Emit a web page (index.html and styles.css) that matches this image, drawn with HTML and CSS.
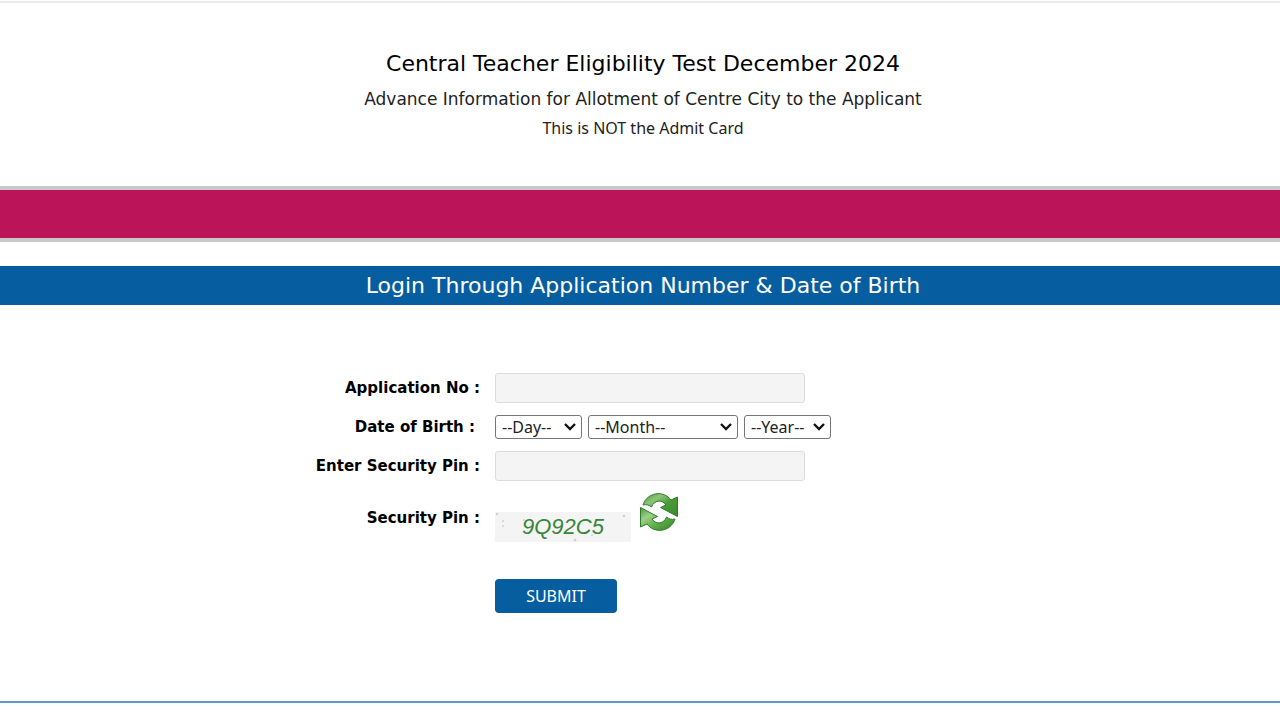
FILE: index.html
```html
<!DOCTYPE html>
<html lang="en">
<head>
  <meta charset="utf-8">
  <title>Central Teacher Eligibility Test December 2024</title>
  <link rel="stylesheet" href="styles.css">
</head>
<body>
  <header class="header">
    <h1>Central Teacher Eligibility Test December 2024</h1>
    <h2>Advance Information for Allotment of Centre City to the Applicant</h2>
    <p>This is NOT the Admit Card</p>
  </header>
  <div class="menubar"></div>
  <main>
    <h2 class="title">Login Through Application Number &amp; Date of Birth</h2>
    <form class="login">
      <label for="regno">Application No :</label>
      <div><input type="text" id="regno" class="textbox"></div>

      <label for="day" class="dob-label">Date of Birth :</label>
      <div class="dob">
        <select id="day" class="short"><option>--Day--</option></select>
        <select id="month" class="month" aria-label="Month"><option>--Month--</option></select>
        <select id="year" class="short" aria-label="Year"><option>--Year--</option></select>
      </div>

      <label for="pin">Enter Security Pin :</label>
      <div><input type="text" id="pin" class="textbox"></div>

      <span class="label">Security Pin :</span>
      <div class="captcha">
        <div class="code">
          <svg class="noise" viewBox="0 0 136 30" aria-hidden="true">
            <g fill="#cdd3cd">
              <circle cx="2" cy="2" r="1.2"/>
              <circle cx="8" cy="9" r="1"/>
              <circle cx="8" cy="14" r="1"/>
              <circle cx="29" cy="8" r="1"/>
              <circle cx="129" cy="4" r="1.3"/>
              <circle cx="97" cy="23" r="1"/>
              <circle cx="80" cy="28" r="1.4"/>
            </g>
          </svg>
          <span>9Q92C5</span>
        </div>
        <button type="button" class="refresh" aria-label="Refresh">
          <svg viewBox="0 0 38 38">
            <defs>
              <linearGradient id="top" x1="0" y1="0" x2="1" y2="1">
                <stop offset="0" stop-color="#4c9a3c"/>
                <stop offset=".3" stop-color="#8cc679"/>
                <stop offset=".55" stop-color="#4a9a39"/>
                <stop offset="1" stop-color="#3a8a2c"/>
              </linearGradient>
              <linearGradient id="bottom" x1="0" y1="0" x2="1" y2="1">
                <stop offset="0" stop-color="#4c9a3c"/>
                <stop offset=".3" stop-color="#9bd088"/>
                <stop offset=".6" stop-color="#5cad49"/>
                <stop offset="1" stop-color="#358328"/>
              </linearGradient>
            </defs>
            <g stroke="#2f7a2a" stroke-width="1" stroke-linejoin="round">
              <path fill="url(#top)" d="M3 12C7-1 24-3 31 7L37.500 4V23.500L20.500 14.500L26 12C22 6 14 7 11.500 14C9 12 6 11 3 12Z"/>
              <path fill="url(#bottom)" d="M35 26C31 39 14 41 7 31L.5 34V14.500L17.500 23.500L12 26C16 32 24 31 26.500 24C29 26 32 27 35 26Z"/>
            </g>
          </svg>
        </button>
      </div>

      <button type="submit" class="submit">SUBMIT</button>
    </form>
  </main>
  <footer class="footer"></footer>
</body>
</html>
```
FILE: styles.css
```css
body {
  margin: 0;
  padding-top: 1px;
  background: #fff;
  color: #000;
  font-family: "Noto Sans", Tahoma, sans-serif;
}
h1, h2, p {
  margin: 0;
  font-weight: normal;
}
.header {
  border-top: 2px solid #ebebeb;
  padding: 45px 0 43px 6px;
  text-align: center;
}
.header h1 {
  font: 22px/32px Verdana, "DejaVu Sans", sans-serif;
}
.header h2 {
  margin-top: 4px;
  font: 17px/30px Verdana, "DejaVu Sans", sans-serif;
  color: #222;
}
.header p {
  font-size: 16px;
  line-height: 29px;
  color: #222;
}
.menubar {
  height: 48px;
  border: solid #c8c8c8;
  border-width: 4px 0;
  background: #bc1459;
}
.title {
  margin-top: 24px;
  padding-left: 6px;
  background: #065ea1;
  color: #fff;
  font: 22px/39px Verdana, "DejaVu Sans", sans-serif;
  text-align: center;
}
.login {
  display: grid;
  grid-template-columns: 3fr 5fr;
  column-gap: 15px;
  row-gap: 12px;
  align-items: center;
  padding: 68px 0 88px 9px;
}
.login label, .login .label {
  font: bold 15px/20px Verdana, "DejaVu Sans", sans-serif;
  text-align: right;
}
.login .dob-label {
  padding-right: 5px;
}
.textbox {
  display: block;
  box-sizing: border-box;
  width: 310px;
  height: 30px;
  border: 1px solid #dcdcdc;
  border-radius: 3px;
  background: #f4f4f4;
}
.dob {
  display: flex;
  gap: 6px;
}
.dob select {
  appearance: none;
  height: 24px;
  padding: 0 0 0 6px;
  border: 1px solid #767676;
  border-radius: 3px;
  background: #fff url("data:image/svg+xml,%3Csvg xmlns='http://www.w3.org/2000/svg' width='12' height='8'%3E%3Cpath d='M1 1l5 5 5-5' fill='none' stroke='%23111' stroke-width='2.400'/%3E%3C/svg%3E") no-repeat right 5px center;
  color: #222;
  font: 16px/22px "Noto Sans", Tahoma, sans-serif;
}
.short {
  width: 87px;
}
.month {
  width: 150px;
}
.captcha {
  display: flex;
  align-items: flex-start;
  gap: 9px;
  height: 49px;
}
.code {
  position: relative;
  align-self: flex-end;
  width: 136px;
  height: 30px;
  background: #f4f4f4;
  color: #38863c;
  font: italic 22px/30px "Liberation Sans", Arial, sans-serif;
  text-align: center;
}
.noise {
  position: absolute;
  left: 0;
  top: 0;
}
.refresh {
  width: 38px;
  height: 38px;
  padding: 0;
  border: 0;
  background: none;
}
.refresh svg {
  display: block;
}
.submit {
  grid-column: 2;
  justify-self: start;
  width: 122px;
  height: 34px;
  margin-top: 25px;
  border: 0;
  border-radius: 4px;
  background: #065ea1;
  color: #fff;
  font: 16px "Noto Sans", Tahoma, sans-serif;
}
.footer {
  border-top: 2px solid #6399c6;
}
```
